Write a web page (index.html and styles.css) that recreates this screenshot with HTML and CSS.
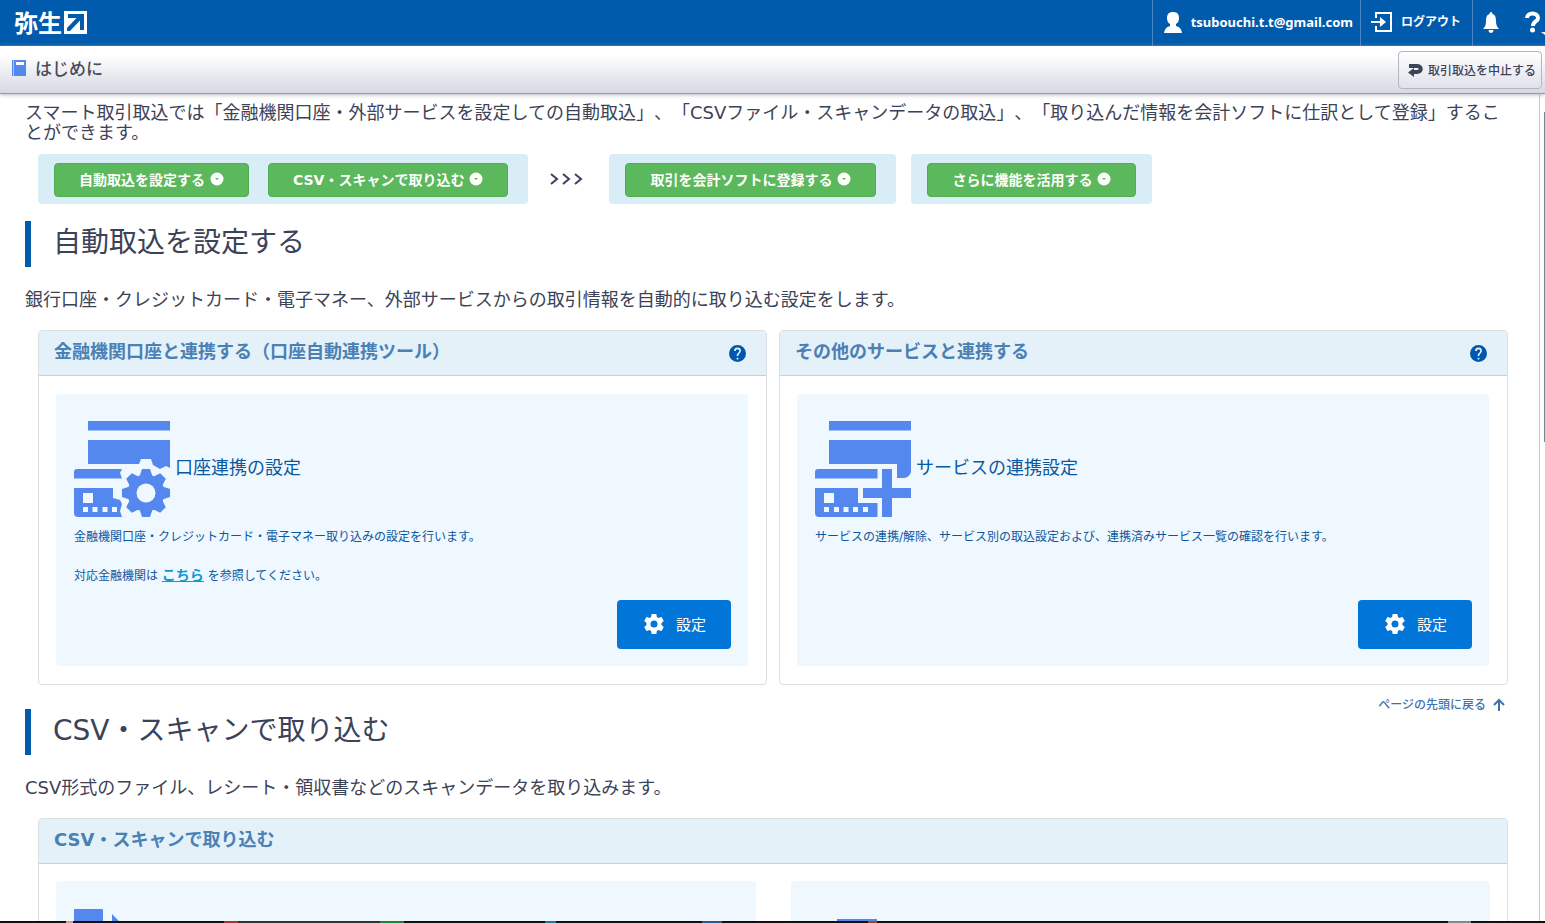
FILE: index.html
```html
<!DOCTYPE html>
<html lang="ja">
<head>
<meta charset="utf-8">
<title>はじめに</title>
<link rel="stylesheet" href="styles.css">
</head>
<body>
<svg class="defs" aria-hidden="true">
  <symbol id="gear" viewBox="0 0 24 24"><path d="M19.43 12.98c.04-.32.07-.64.07-.98s-.03-.66-.07-.98l2.11-1.65c.19-.15.24-.42.12-.64l-2-3.46c-.12-.22-.39-.3-.61-.22l-2.49 1c-.52-.4-1.08-.73-1.69-.98l-.38-2.65A.49.49 0 0 0 14 2h-4c-.25 0-.46.18-.49.42l-.38 2.65c-.61.25-1.17.59-1.69.98l-2.49-1c-.23-.09-.49 0-.61.22l-2 3.46c-.13.22-.07.49.12.64l2.11 1.65c-.04.32-.07.65-.07.98s.03.66.07.98l-2.11 1.65c-.19.15-.24.42-.12.64l2 3.46c.12.22.39.3.61.22l2.49-1c.52.4 1.08.73 1.69.98l.38 2.65c.03.24.24.42.49.42h4c.25 0 .46-.18.49-.42l.38-2.65c.61-.25 1.17-.59 1.69-.98l2.49 1c.23.09.49 0 .61-.22l2-3.46c.12-.22.07-.49-.12-.64l-2.11-1.65zM12 15.5a3.5 3.5 0 1 1 0-7 3.5 3.5 0 0 1 0 7z"/></symbol>
  <symbol id="help" viewBox="2 2 20 20"><path d="M12 2a10 10 0 1 0 0 20 10 10 0 0 0 0-20zm1 17h-2v-2h2v2zm2.07-7.75-.9.92C13.45 12.9 13 13.5 13 15h-2v-.5c0-1.1.45-2.1 1.17-2.83l1.24-1.26c.37-.36.59-.86.59-1.41a2 2 0 1 0-4 0H8a4 4 0 1 1 8 0c0 .88-.36 1.68-.93 2.25z"/></symbol>
  <symbol id="down" viewBox="0 0 14 14"><circle cx="7" cy="7" r="6.5" fill="#fff"/><path d="M5 6h4L7 8z" fill="#5cb85c"/></symbol>
</svg>
<div class="app">
  <header class="top">
    <a class="logo" href="#">弥生<svg width="23" height="23" viewBox="0 0 23 23"><path fill="#fff" d="M0 0h23v23H0z"/><path fill="#005bac" d="M4 3h16v16h-4V9.500L6 20H3v-3L12.500 7H4z"/></svg></a>
    <nav class="account">
      <a class="item user" href="#"><svg width="18" height="21" viewBox="0 0 18 21"><path fill="#fff" d="M9 0c4 0 6 2 6 6 0 3-1 5-3 6v2c3 1 5 2 6 7H0c1-5 3-6 6-7v-2C4 11 3 9 3 6c0-4 2-6 6-6z"/></svg>tsubouchi.t.t@gmail.com</a>
      <a class="item logout" href="#"><svg width="22" height="20" viewBox="0 0 22 20"><path fill="none" stroke="#fff" stroke-width="2" d="M5 6V1h15v18H5v-5"/><path fill="#fff" d="M0 9h9V5l6 5-6 5v-4H0z"/></svg>ログアウト</a>
      <button class="item bell" type="button" aria-label="お知らせ"><svg width="16" height="21" viewBox="0 0 16 21"><path fill="#fff" d="M8 0c1 0 1.500 1 1.500 2 3 1 3.500 4 3.500 7 0 4 1 6 3 8H0c2-2 3-4 3-8 0-3 .5-6 3.500-7C6.500 1 7 0 8 0zM5.500 18h5c0 4-5 4-5 0z"/></svg></button>
      <button class="help" type="button" aria-label="ヘルプ"><svg width="20" height="24" viewBox="0 0 20 24"><path fill="none" stroke="#fff" stroke-width="4" d="M2 7c0-6 11-6 11 0 0 4-5 3-5 8"/><circle cx="7.500" cy="19" r="2.500" fill="#fff"/><path fill="#fff" d="M16 21h4v3z"/></svg></button>
    </nav>
  </header>
  <div class="titlebar">
    <h1><svg width="14" height="16" viewBox="0 0 14 16"><path fill="#5588ee" d="M0 0h14v16H0z"/><path fill="#a9c2f7" d="M1 0h1v16H1z"/><path fill="#fff" d="M4 2h8v3H4z"/></svg>はじめに</h1>
    <button class="stop" type="button"><svg width="15" height="14" viewBox="0 0 15 14"><path fill="none" stroke="#3c4257" stroke-width="4" d="M1 3h8c5 0 5 6 0 6H5"/><path fill="#3c4257" d="M0 9.500 6 5v9z"/></svg>取引取込を中止する</button>
  </div>
  <div class="frame">
    <main>
      <p class="lead">スマート取引取込では「金融機関口座・外部サービスを設定しての自動取込」、「CSVファイル・スキャンデータの取込」、「取り込んだ情報を会計ソフトに仕訳として登録」することができます。</p>
      <nav class="steps">
        <div class="step"><a href="#auto">自動取込を設定する<svg><use href="#down"/></svg></a><a href="#csv">CSV・スキャンで取り込む<svg><use href="#down"/></svg></a></div>
        <svg class="chevrons" width="34" height="14" viewBox="0 0 34 14"><path fill="none" stroke="#3c4257" stroke-width="2" d="m1 2 6 5-6 5M13 2l6 5-6 5M25 2l6 5-6 5"/></svg>
        <div class="step"><a href="#register">取引を会計ソフトに登録する<svg><use href="#down"/></svg></a></div>
        <div class="step last"><a href="#more">さらに機能を活用する<svg><use href="#down"/></svg></a></div>
      </nav>

      <h2 id="auto">自動取込を設定する</h2>
      <p class="desc">銀行口座・クレジットカード・電子マネー、外部サービスからの取引情報を自動的に取り込む設定をします。</p>
      <div class="panels">
        <section class="panel">
          <div class="head"><h3>金融機関口座と連携する（口座自動連携ツール）</h3><a href="#" aria-label="ヘルプ"><svg><use href="#help"/></svg></a></div>
          <div class="body">
            <div class="card">
              <div class="name"><svg width="96" height="96" viewBox="0 0 96 96" fill="#5588ee"><path d="M14 0h82v9.500H14zM14 19h82v28l-4-2-6 3-7-4-2-6H67l-2 5H14zM3 48h45l-2 4 2 5.500H0V51q0-3 3-3zM0 67h39v10l7 2 2 4-2 7 2 6H4q-4 0-4-4z"/><path fill="#eff7ff" d="M9 72h10v10H9zM9 86h5v5H9zM18.500 86h5v5h-5zM28.500 86h5v5h-5zM38 86h5v5h-5z"/><circle cx="72" cy="72" r="18.500"/><g id="teeth"><path id="tooth" d="M65 57l3-9h8l3 9v30l-3 9h-8l-3-9z"/><use href="#tooth" transform="rotate(90 72 72)"/></g><use href="#teeth" transform="rotate(45 72 72)"/><circle cx="72" cy="72" r="9.500" fill="#eff7ff"/></svg><h4>口座連携の設定</h4></div>
              <p>金融機関口座・クレジットカード・電子マネー取り込みの設定を行います。</p>
              <p class="ref">対応金融機関は <a href="#">こちら</a> を参照してください。</p>
              <button class="set" type="button"><svg><use href="#gear"/></svg>設定</button>
            </div>
          </div>
        </section>
        <section class="panel">
          <div class="head"><h3>その他のサービスと連携する</h3><a href="#" aria-label="ヘルプ"><svg><use href="#help"/></svg></a></div>
          <div class="body">
            <div class="card">
              <div class="name"><svg width="96" height="96" viewBox="0 0 96 96" fill="#5588ee"><path d="M14 0h82v9.500H14zM14 19h82v32q-2 6-8 6h-6V43H14zM3 48h59.500v9.500H0V51q0-3 3-3zM0 67h43v15h19.500v14H4q-4 0-4-4zM67 48h10v19h19v10H77v19H67V77H48V67h19z"/><path fill="#eff7ff" d="M9 72h10v10H9zM9 86h5v5H9zM19 86h5v5h-5zM28.500 86h5v5h-5zM38 86h5v5h-5zM48 86h5v5h-5z"/></svg><h4>サービスの連携設定</h4></div>
              <p>サービスの連携/解除、サービス別の取込設定および、連携済みサービス一覧の確認を行います。</p>
              <button class="set" type="button"><svg><use href="#gear"/></svg>設定</button>
            </div>
          </div>
        </section>
      </div>
      <div class="back"><a href="#">ページの先頭に戻る<svg width="12" height="13" viewBox="0 0 12 13"><path fill="none" stroke="#3b73af" stroke-width="2" d="M6 13V2M1 7l5-5 5 5"/></svg></a></div>

      <h2 id="csv">CSV・スキャンで取り込む</h2>
      <p class="desc">CSV形式のファイル、レシート・領収書などのスキャンデータを取り込みます。</p>
      <section class="panel wide">
        <div class="head"><h3>CSV・スキャンで取り込む</h3></div>
        <div class="body">
          <div class="card"><svg width="96" height="96" viewBox="0 0 96 96" fill="#5588ee"><path d="M1 1h27q1 0 1 1v94H0V2q0-1 1-1zM38 6l24 24H38z"/></svg></div>
          <div class="card"><svg width="96" height="96" viewBox="0 0 96 96" fill="#5588ee"><path d="M28 11h40v60H28z"/></svg></div>
        </div>
      </section>
    </main>
    <div class="scroll"><div class="thumb"></div></div>
  </div>
  <div class="edge"></div>
</div>
</body>
</html>
```
FILE: styles.css
```css
* { box-sizing: border-box; }
body, h1, h2, h3, h4, p { margin: 0; }
body {
  font-family: "DejaVu Sans", "Noto Sans CJK JP", sans-serif;
  text-spacing-trim: space-all;
  color: #3c4257;
  background: #fff;
}
a { color: inherit; text-decoration: none; }
button { font: inherit; color: inherit; border: 0; background: none; padding: 0; }
svg { display: block; flex: none; }
.defs { display: none; }

.app { height: 100vh; display: flex; flex-direction: column; overflow: hidden; }

.top {
  flex: none;
  height: 46px;
  display: flex;
  justify-content: space-between;
  background: #005bac;
  color: #fff;
  overflow: hidden;
}
.logo {
  display: flex;
  align-items: center;
  gap: 2px;
  padding-left: 14px;
  padding-bottom: 2px;
  font: bold 24px/40px "Noto Sans CJK JP", sans-serif;
}
.account { display: flex; font: bold 12px/20px "Noto Sans", "Noto Sans CJK JP", sans-serif; }
.item { display: flex; align-items: center; border-left: 1px solid #4a86c4; padding-bottom: 2px; }
.user { gap: 9px; padding-left: 11px; padding-right: 7px; font-size: 13px; }
.logout { gap: 8px; padding-left: 10px; padding-right: 11px; }
.bell { padding-left: 10px; padding-right: 9px; }
.help { padding-left: 17px; }

.titlebar {
  flex: none;
  height: 48px;
  display: flex;
  align-items: center;
  justify-content: space-between;
  padding: 0 3px 0 12px;
  background: linear-gradient(#fff 20%, #d6d8e3);
  border-bottom: 1px solid #999;
  box-shadow: 0 1px 4px #bbb;
  z-index: 1;
}
.titlebar h1 {
  display: flex;
  align-items: center;
  gap: 9px;
  padding-bottom: 3px;
  font: 500 17px/24px "Noto Sans CJK JP", sans-serif;
  color: #4a4c5c;
}
.stop {
  display: flex;
  align-items: center;
  gap: 5px;
  height: 38px;
  padding: 0 5px 0 9px;
  border: 1px solid #b4b6c2;
  border-radius: 4px;
  background: linear-gradient(#fff, #e0e2eb);
  font-size: 12px;
  font-weight: 500;
}

.frame { flex: 1; min-height: 0; display: flex; }
main { flex: 1; min-width: 0; overflow: hidden; padding: 9px 31px 0 25px; }
.scroll { width: 6px; flex: none; border-left: 1px solid #c6c8ce; padding-top: 18px; }
.thumb { width: 1px; height: 330px; margin-left: auto; background: #7c869c; }

.lead, .desc { font-size: 18px; line-height: 20px; }

.steps { display: flex; align-items: center; margin: 11px 0 17px 13px; }
.step { display: flex; gap: 19px; padding: 9px 20px 9px 16px; border-radius: 4px; background: #d9edf7; height: 50px; }
.step + .step { margin-left: 15px; }
.step a {
  display: flex;
  align-items: center;
  gap: 5px;
  height: 34px;
  padding: 0 24px 2px;
  border: 1px solid #4fae4f;
  border-radius: 4px;
  background: #5cb85c;
  color: #fff;
  font-size: 14px;
  font-weight: bold;
  white-space: nowrap;
}
.step svg { width: 14px; height: 14px; }
.last { padding-right: 16px; }
.chevrons { margin: 0 25px 0 22px; }

h2 {
  height: 46px;
  padding-left: 22px;
  border-left: 6px solid #005bac;
  font-size: 28px;
  line-height: 44px;
  font-weight: 400;
}
.desc { margin: 23px 0 20px; }

.panels { display: flex; gap: 12px; }
.panels, .wide { margin-left: 13px; }
.panel { flex: 1; border: 1px solid #dcdfe2; border-radius: 4px; }
.head {
  height: 45px;
  display: flex;
  align-items: center;
  justify-content: space-between;
  padding: 0 20px 0 15px;
  background: #e4f1f9;
  border-bottom: 1px solid #c0d3e0;
}
.head h3 { font-size: 18px; line-height: 24px; padding-bottom: 3px; color: #4a80b4; }
.head svg { width: 17px; height: 17px; fill: #0058ac; }
.body { padding: 18px 18px 18px 17px; }
.card { background: #eff7ff; border-radius: 4px; padding: 27px 17px 17px 18px; color: #0b57a0; }
.panels .card { height: 272px; display: flex; flex-direction: column; }
.name { display: flex; align-items: center; gap: 5px; margin-bottom: 10px; }
.name h4 { font-size: 18px; font-weight: 400; line-height: 24px; padding-bottom: 2px; }
.card p { font-size: 12px; line-height: 20px; }
.card .ref { margin-top: 18px; }
.ref a { font-size: 14px; font-weight: bold; color: #0c9bd0; text-decoration: underline; }
.set {
  align-self: flex-end;
  margin-top: auto;
  width: 114px;
  height: 49px;
  display: flex;
  align-items: center;
  justify-content: center;
  gap: 10px;
  padding-bottom: 2px;
  border-radius: 4px;
  background: #0275d8;
  color: #fff;
  font-size: 15px;
}
.set svg { width: 24px; height: 24px; fill: #fff; }
.back { display: flex; justify-content: flex-end; height: 24px; padding-top: 13px; }
.back a { display: flex; gap: 7px; padding-right: 3px; font-size: 12px; line-height: 14px; font-weight: 500; color: #3b73af; }
.wide .body { display: grid; grid-template-columns: 1fr 1fr; gap: 35px; padding: 17px; }

/* Coloured slivers of the running programs along the bottom edge */
.edge {
  flex: none;
  height: 2px;
  background: linear-gradient(90deg, #111 66px, #d99 66px 73px, #111 73px 224px, #a33 224px 238px, #333 238px 380px, #183 380px 404px, #111 404px 545px, #27a 545px 556px, #111 556px 702px, #358 702px 722px, #111 722px 868px, #a42 868px 877px, #111 877px 1448px, #888 1448px 1471px, #111 1471px);
}
```
